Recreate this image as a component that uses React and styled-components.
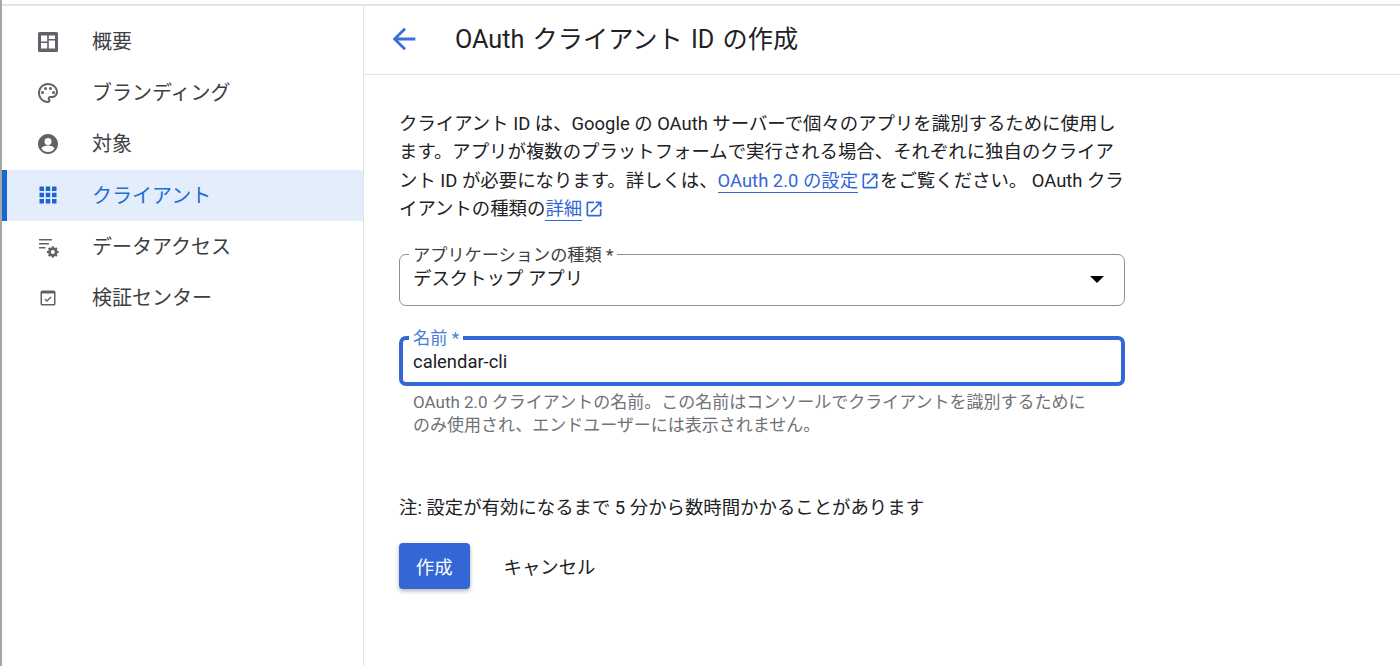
import React from "react";
import styled, { createGlobalStyle } from "styled-components";

const Global = createGlobalStyle`
  html, body { margin: 0; padding: 0; background: #fff; }
  body { font-family: Roboto, "Noto Sans CJK JP", sans-serif; color: #202124; }
  #root { height: 666px; overflow: hidden; }
`;

const Page = styled.div`
  height: 666px;
  box-sizing: border-box;
  padding-top: 4px;
  border-left: 2px solid #a3a8a1;
  overflow: hidden;
`;
const Shell = styled.div`
  display: flex;
  height: 100%;
  border-top: 2px solid #e3e3e3;
`;
const Sidebar = styled.nav`
  width: 362px;
  flex: none;
  box-sizing: border-box;
  padding-top: 10px;
  border-right: 1px solid #dfe1e5;
`;
const NavRow = styled.div`
  display: flex;
  align-items: center;
  height: 51.2px;
  box-sizing: border-box;
  padding-left: ${(p) => (p.$active ? "29px" : "34px")};
  border-left: ${(p) => (p.$active ? "5px solid #1a66d2" : "0")};
  background: ${(p) => (p.$active ? "#e3edfc" : "transparent")};
  color: ${(p) => (p.$active ? "#1f6ed4" : "#3c4043")};
  font-size: 20px;
`;
const NavLabel = styled.span`
  position: relative;
  top: -1px;
`;
const NavIcon = styled.svg`
  width: 24px;
  height: 24px;
  flex: none;
  margin-right: 32px;
  fill: currentColor;
  color: ${(p) => (p.$active ? "#1a66d2" : "#5f6368")};
`;
const Main = styled.main`
  flex: 1;
  min-width: 0;
`;
const Header = styled.header`
  display: flex;
  align-items: center;
  height: 69px;
  box-sizing: border-box;
  padding: 0 0 3px 23px;
  border-bottom: 1px solid #e3e3e3;
`;
const BackIcon = styled.svg`
  width: 34px;
  height: 34px;
  flex: none;
  margin-right: 34px;
  fill: #3a6fd8;
`;
const Title = styled.h1`
  margin: 0 0 3px;
  font-size: 25.2px;
  word-spacing: 2px;
  font-weight: 400;
  color: #202124;
`;
const Content = styled.div`
  width: 726px;
  padding: 35px 0 0 35px;
`;
const Intro = styled.p`
  margin: 0;
  width: 725px;
  font-size: 18.4px;
  line-height: 28.4px;
  color: #202124;
`;
const Link = styled.a`
  color: #3367d6;
  text-decoration: none;
  border-bottom: 1px solid #3367d6;
  padding-bottom: 1px;
`;
const ExtIcon = styled.svg`
  width: 20px;
  height: 20px;
  fill: #3367d6;
  vertical-align: -4px;
  margin: 0 0 0 2px;
`;
const Field = styled.div`
  position: relative;
  box-sizing: border-box;
  height: ${(p) => (p.$focused ? "50px" : "52px")};
  margin-top: 30px;
  display: flex;
  align-items: center;
  justify-content: space-between;
  padding: ${(p) => (p.$focused ? "1px 9px 0 10px" : "0 20px 5px 13px")};
  border: ${(p) => (p.$focused ? "4px solid #3367d6" : "1.5px solid #8f8f8f")};
  border-radius: 7px;
  font-size: 18.4px;
  color: #202124;
`;
const FloatLabel = styled.label`
  position: absolute;
  top: ${(p) => (p.$focused ? "-12px" : "-10px")};
  left: ${(p) => (p.$focused ? "6px" : "9px")};
  padding: 0 4px;
  background: #fff;
  font-size: 17.2px;
  line-height: 21px;
  color: ${(p) => (p.$focused ? "#4a7bdc" : "#3c4043")};
`;
const Caret = styled.span`
  width: 0;
  height: 0;
  margin-top: 5px;
  border-left: 7px solid transparent;
  border-right: 7px solid transparent;
  border-top: 7px solid #000;
`;
const Hint = styled.p`
  margin: 5px 0 0 14px;
  width: 680px;
  font-size: 17px;
  line-height: 23px;
  color: #6f7276;
`;
const Note = styled.p`
  margin: 57px 0 0;
  font-size: 18.4px;
  line-height: 28px;
  color: #202124;
`;
const Actions = styled.div`
  display: flex;
  align-items: center;
  gap: 34px;
  margin-top: 21px;
`;
const Primary = styled.button`
  width: 70.500px;
  height: 46px;
  border: 0;
  border-radius: 4px;
  background: #3367d6;
  color: #fff;
  font: inherit;
  font-size: 18.4px;
  box-shadow: 0 2px 4px rgba(60, 64, 67, 0.4);
`;
const Ghost = styled.button`
  padding: 0;
  border: 0;
  background: none;
  color: #202124;
  font: inherit;
  font-size: 18.4px;
`;

const Icons = {
  overview: "M3.500 2h17A1.500 1.500 0 0 1 22 3.500v17a1.500 1.500 0 0 1-1.500 1.500h-17A1.500 1.500 0 0 1 2 20.500v-17A1.500 1.500 0 0 1 3.500 2zM5 5.500v6h6.200v-6zm7.800 0v3.500H19V5.500zm0 5.100V18.500H19v-7.900zM5 13v5.500h6.200V13z",
  palette: "M12 2C6.490 2 2 6.490 2 12s4.490 10 10 10c1.380 0 2.500-1.120 2.500-2.500 0-.61-.23-1.200-.64-1.670-.08-.1-.13-.21-.13-.33 0-.28.220-.5.500-.5H16c3.310 0 6-2.690 6-6 0-4.960-4.490-9-10-9zm4 13h-1.770c-1.380 0-2.500 1.120-2.500 2.500 0 .61.220 1.200.63 1.650.1.110.14.220.14.350 0 .28-.22.500-.5.500-4.410 0-8-3.590-8-8s3.590-8 8-8 8 3.140 8 7c0 2.210-1.790 4-4 4zM6.500 13a1.500 1.500 0 1 0 0-3 1.500 1.500 0 0 0 0 3zm3-4a1.500 1.500 0 1 0 0-3 1.500 1.500 0 0 0 0 3zm5 0a1.500 1.500 0 1 0 0-3 1.500 1.500 0 0 0 0 3zm3 4a1.500 1.500 0 1 0 0-3 1.500 1.500 0 0 0 0 3z",
  account: "M12 2C6.480 2 2 6.480 2 12s4.480 10 10 10 10-4.480 10-10S17.520 2 12 2zm0 4a3.500 3.500 0 1 1 0 7 3.500 3.500 0 0 1 0-7zm0 14c-2.700 0-5.100-1.300-6.500-3.300.05-2 4.300-3.100 6.500-3.100s6.450 1.100 6.500 3.100C17.100 18.700 14.700 20 12 20z",
  apps: "M3.500 3.500h4.500v4.500H3.500zm6.250 0h4.500v4.500h-4.500zm6.250 0h4.500v4.500H16zM3.500 9.750h4.500v4.500H3.500zm6.250 0h4.500v4.500h-4.500zm6.250 0h4.500v4.500H16zM3.500 16h4.500v4.500H3.500zm6.250 0h4.500v4.500h-4.500zM16 16h4.500v4.500H16z",
  data: "M3 5h13v1.600H3zm0 4h10v1.600H3zm0 4h6.500v1.600H3zM22.600 17.100l-1.300-.25a4 4 0 0 0-.5-1.200l.75-1.100-1.300-1.300-1.100.75a4 4 0 0 0-1.200-.5L17.700 12.200h-1.800l-.25 1.300a4 4 0 0 0-1.200.5l-1.100-.75-1.300 1.300.75 1.100a4 4 0 0 0-.5 1.200l-1.300.25v1.800l1.300.25c.1.430.28.830.5 1.200l-.75 1.100 1.300 1.300 1.100-.75c.37.220.77.400 1.200.5l.25 1.300h1.800l.25-1.300c.43-.1.830-.28 1.200-.5l1.100.75 1.300-1.300-.75-1.100c.22-.37.400-.77.500-1.200l1.300-.25zM16.800 20a2 2 0 1 1 0-4 2 2 0 0 1 0 4z",
  verify: "M6 4.500h12A1.500 1.500 0 0 1 19.500 6v12a1.500 1.500 0 0 1-1.500 1.500H6A1.500 1.500 0 0 1 4.500 18V6A1.500 1.500 0 0 1 6 4.500zM6 7.500V18h12V7.500zm4.900 8.600-2.500-2.500 1-1 1.500 1.500 3.700-3.700 1 1z",
};

const nav = [
  ["概要", "overview"],
  ["ブランディング", "palette"],
  ["対象", "account"],
  ["クライアント", "apps", true],
  ["データアクセス", "data"],
  ["検証センター", "verify"],
];

const External = () => (
  <ExtIcon viewBox="0 0 24 24">
    <path d="M19 19H5V5h7V3H5a2 2 0 0 0-2 2v14a2 2 0 0 0 2 2h14a2 2 0 0 0 2-2v-7h-2v7zM14 3v2h3.590l-9.830 9.830 1.410 1.410L19 6.410V10h2V3h-7z" />
  </ExtIcon>
);

export default function App() {
  return (
    <>
      <Global />
      <Page>
        <Shell>
          <Sidebar>
            {nav.map(([label, icon, active]) => (
              <NavRow key={label} $active={active}>
                <NavIcon viewBox="0 0 24 24" $active={active}>
                  <path fillRule="evenodd" d={Icons[icon]} />
                </NavIcon>
                <NavLabel>{label}</NavLabel>
              </NavRow>
            ))}
          </Sidebar>
          <Main>
            <Header>
              <BackIcon viewBox="0 0 24 24">
                <path d="M20 11H7.830l5.590-5.590L12 4l-8 8 8 8 1.410-1.410L7.830 13H20v-2z" />
              </BackIcon>
              <Title>OAuth クライアント ID の作成</Title>
            </Header>
            <Content>
              <Intro>
                クライアント ID は、Google の OAuth サーバーで個々のアプリを識別するために使用します。アプリが複数のプラットフォームで実行される場合、それぞれに独自のクライアント ID が必要になります。詳しくは、<Link>OAuth 2.0 の設定</Link><External />をご覧ください。 OAuth クライアントの種類の<Link>詳細</Link><External />
              </Intro>
              <Field>
                <FloatLabel>アプリケーションの種類 *</FloatLabel>
                デスクトップ アプリ
                <Caret />
              </Field>
              <Field $focused>
                <FloatLabel $focused>名前 *</FloatLabel>
                calendar-cli
              </Field>
              <Hint>OAuth 2.0 クライアントの名前。この名前はコンソールでクライアントを識別するためにのみ使用され、エンドユーザーには表示されません。</Hint>
              <Note>注: 設定が有効になるまで 5 分から数時間かかることがあります</Note>
              <Actions>
                <Primary>作成</Primary>
                <Ghost>キャンセル</Ghost>
              </Actions>
            </Content>
          </Main>
        </Shell>
      </Page>
    </>
  );
}
